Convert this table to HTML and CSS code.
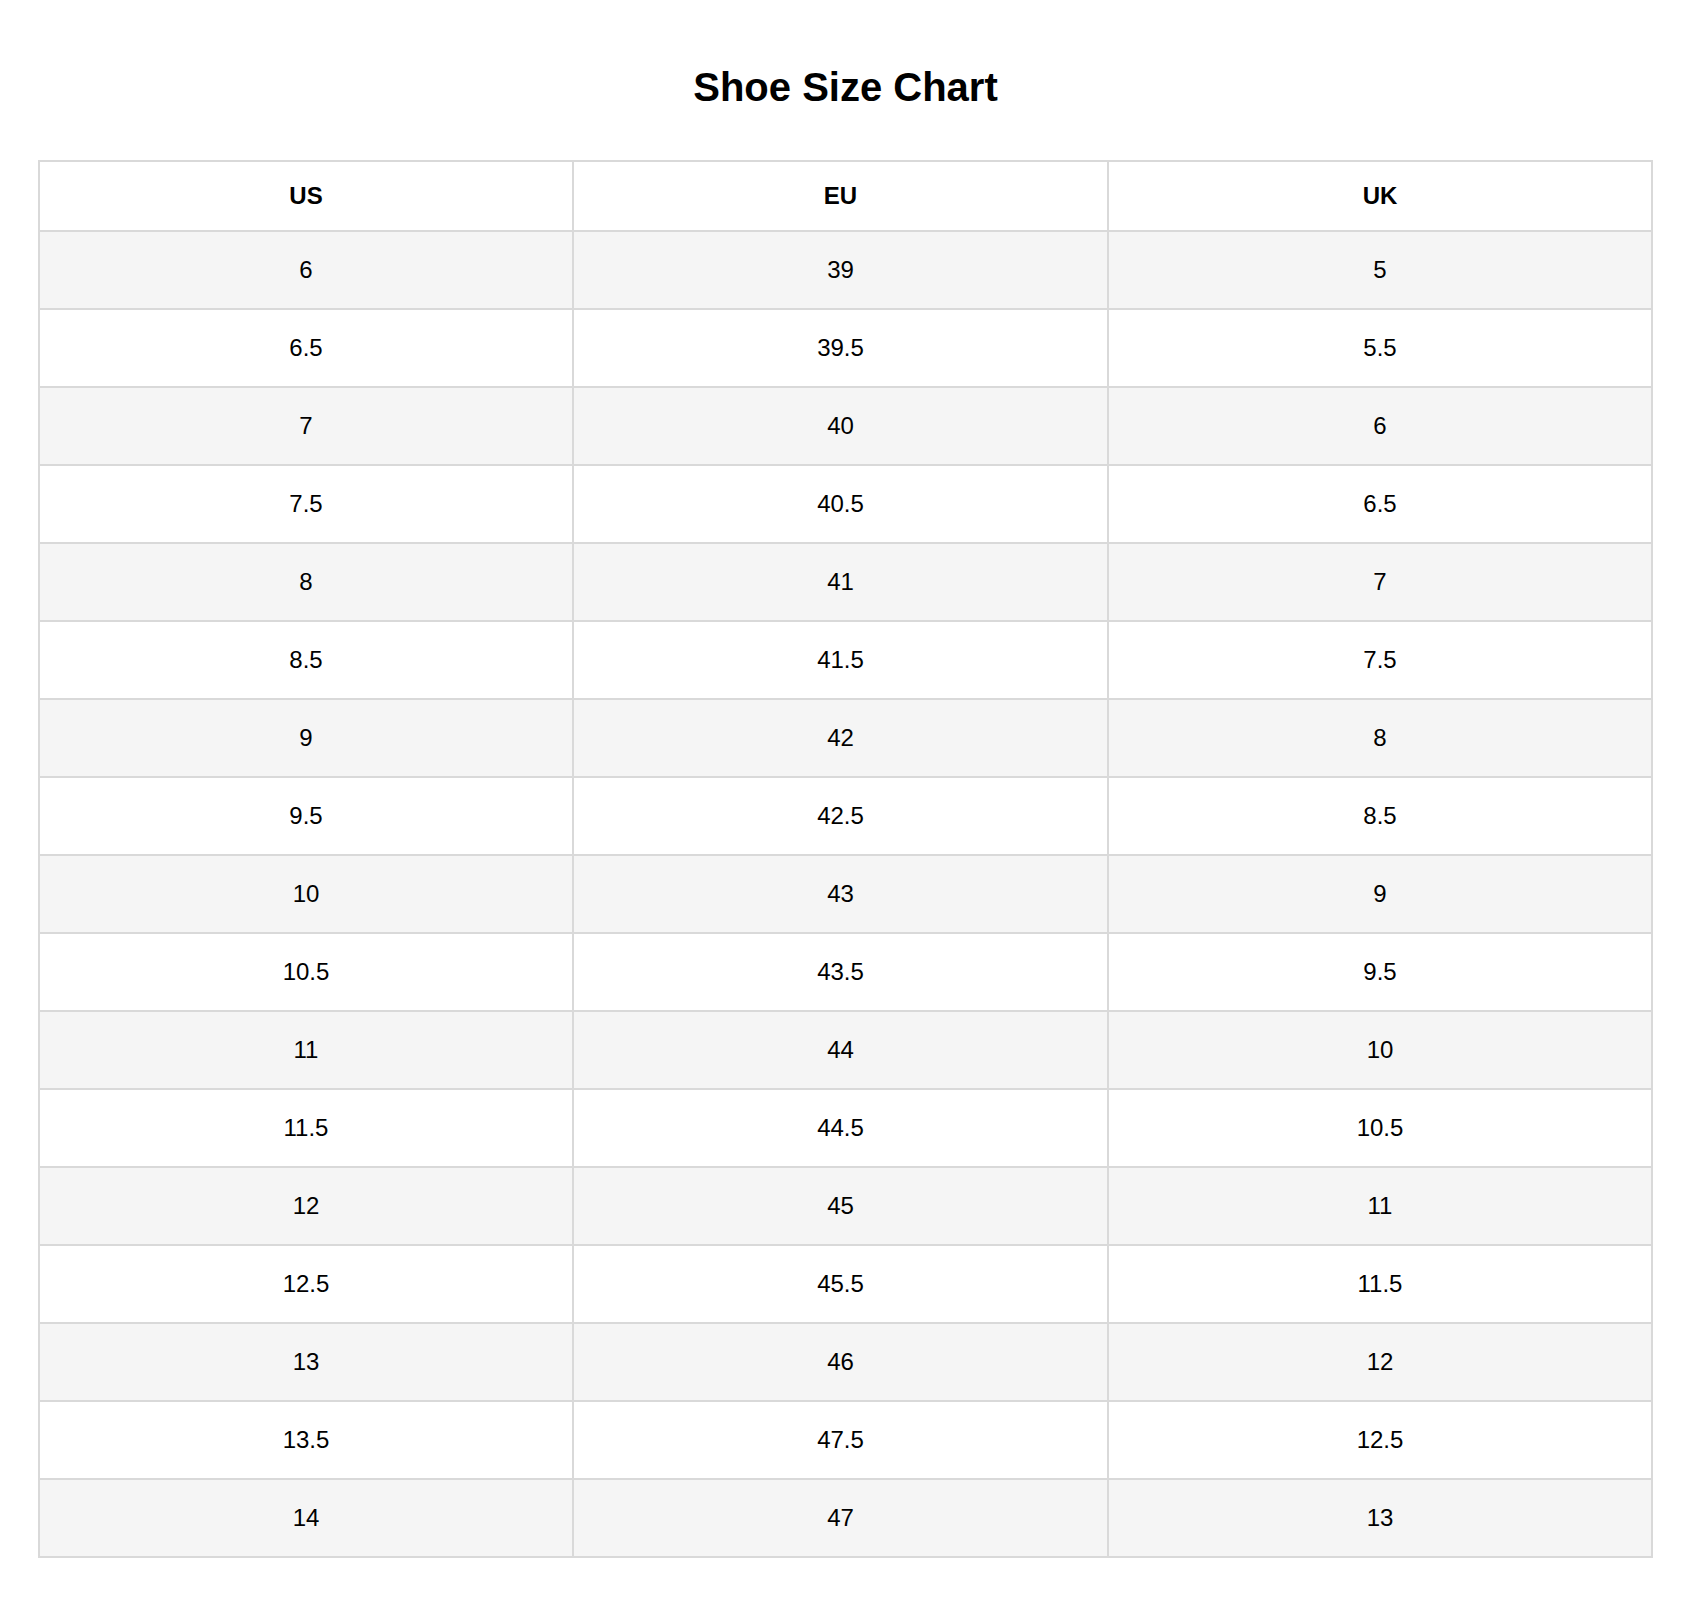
FILE: index.html
```html
<!DOCTYPE html>
<html lang="en">
<head>
<meta charset="utf-8">
<title>Shoe Size Chart</title>
<link rel="stylesheet" href="styles.css">
</head>
<body>
<div class="page">
  <h1 class="title">Shoe Size Chart</h1>
  <table class="chart">
    <colgroup>
      <col class="c-us">
      <col class="c-eu">
      <col class="c-uk">
    </colgroup>
    <thead>
      <tr><th>US</th><th>EU</th><th>UK</th></tr>
    </thead>
    <tbody>
      <tr><td>6</td><td>39</td><td>5</td></tr>
      <tr><td>6.5</td><td>39.5</td><td>5.5</td></tr>
      <tr><td>7</td><td>40</td><td>6</td></tr>
      <tr><td>7.5</td><td>40.5</td><td>6.5</td></tr>
      <tr><td>8</td><td>41</td><td>7</td></tr>
      <tr><td>8.5</td><td>41.5</td><td>7.5</td></tr>
      <tr><td>9</td><td>42</td><td>8</td></tr>
      <tr><td>9.5</td><td>42.5</td><td>8.5</td></tr>
      <tr><td>10</td><td>43</td><td>9</td></tr>
      <tr><td>10.5</td><td>43.5</td><td>9.5</td></tr>
      <tr><td>11</td><td>44</td><td>10</td></tr>
      <tr><td>11.5</td><td>44.5</td><td>10.5</td></tr>
      <tr><td>12</td><td>45</td><td>11</td></tr>
      <tr><td>12.5</td><td>45.5</td><td>11.5</td></tr>
      <tr><td>13</td><td>46</td><td>12</td></tr>
      <tr><td>13.5</td><td>47.5</td><td>12.5</td></tr>
      <tr><td>14</td><td>47</td><td>13</td></tr>
    </tbody>
  </table>
</div>
</body>
</html>
```
FILE: styles.css
```css
html, body {
  margin: 0;
  padding: 0;
  background: #ffffff;
}

body {
  font-family: "Liberation Sans", Arial, Helvetica, sans-serif;
  color: #000000;
}

.page {
  padding: 65px 37px 40px 38px;
}

.title {
  margin: 0 0 50px 0;
  font-size: 40px;
  font-weight: bold;
  text-align: center;
  line-height: 45px;
}

.chart {
  width: 100%;
  border-collapse: collapse;
  table-layout: fixed;
}

.c-us { width: 534px; }
.c-eu { width: 535px; }
.c-uk { width: auto; }

.chart th,
.chart td {
  border: 2px solid #d9d9d9;
  text-align: center;
  font-size: 24px;
  line-height: 26px;
}

.chart th {
  padding: 21px 8px;
  font-weight: bold;
}

.chart td {
  padding: 25px 8px;
  font-weight: normal;
}

.chart tbody tr:nth-child(odd) {
  background: #f5f5f5;
}
```
